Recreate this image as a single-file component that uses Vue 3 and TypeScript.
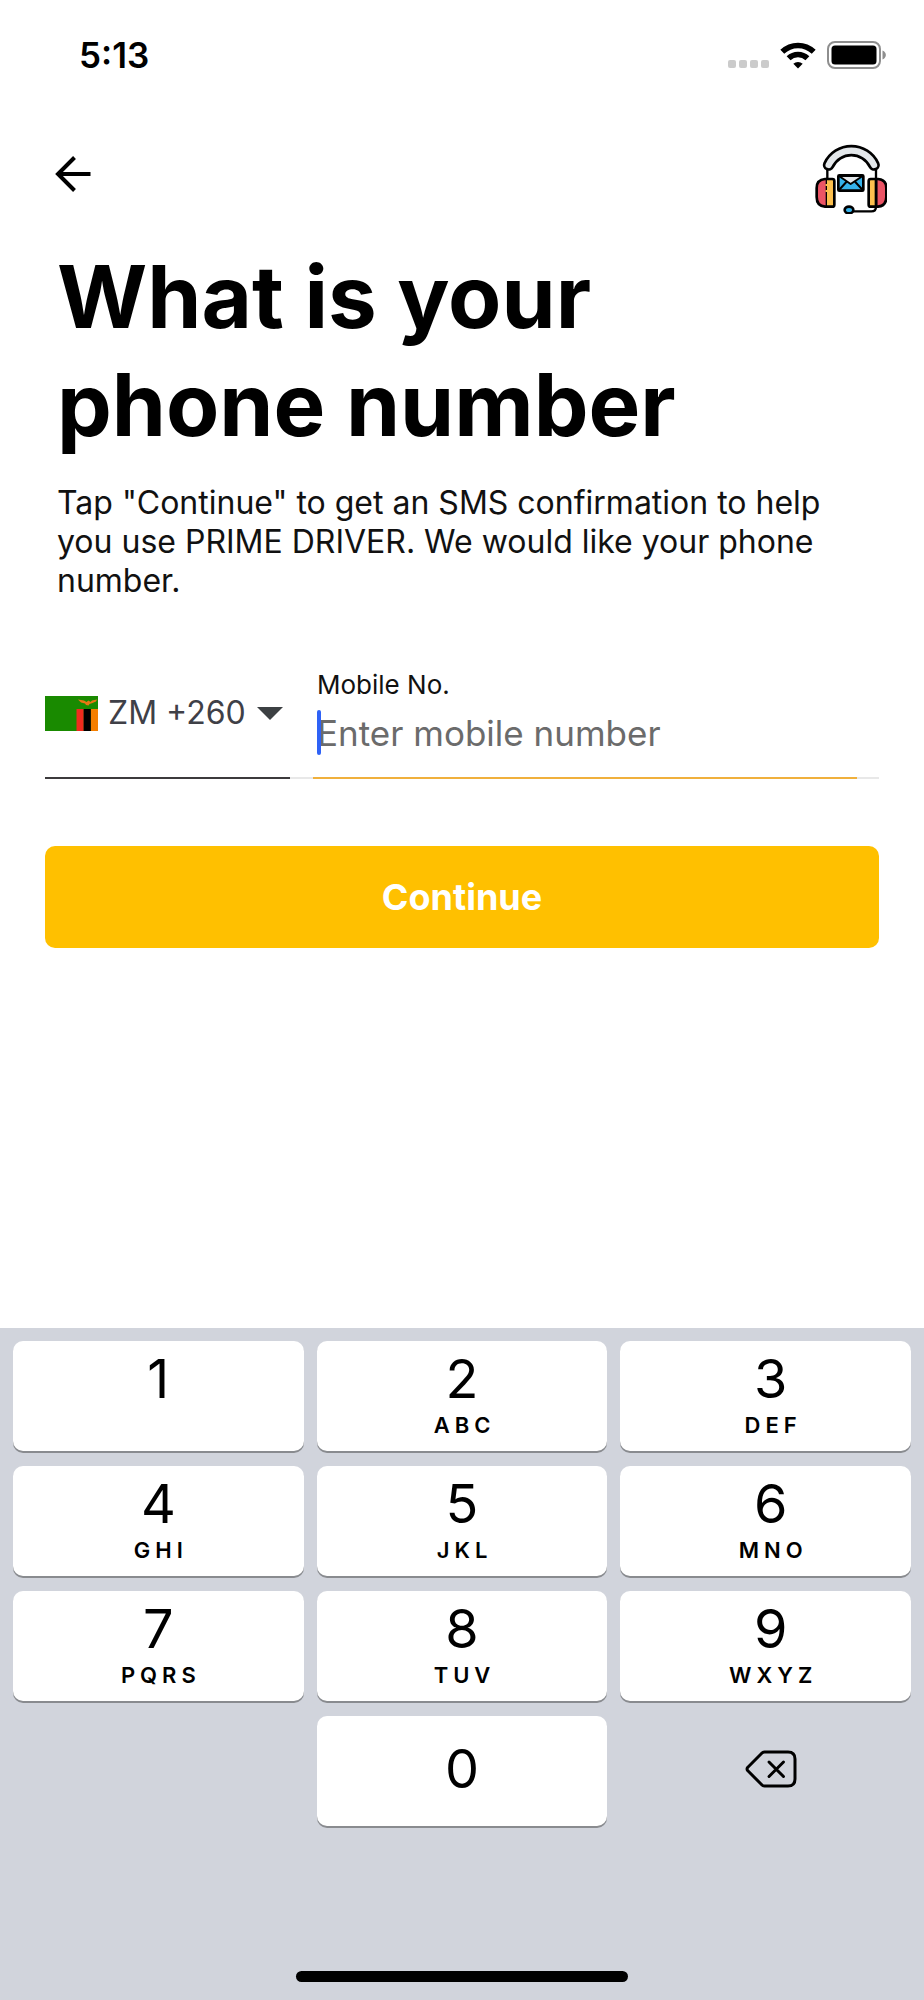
<script setup lang="ts">
import { ref } from 'vue'

interface Key {
  digit: string
  letters: string
}

const keys: Key[] = [
  { digit: '1', letters: '' },
  { digit: '2', letters: 'ABC' },
  { digit: '3', letters: 'DEF' },
  { digit: '4', letters: 'GHI' },
  { digit: '5', letters: 'JKL' },
  { digit: '6', letters: 'MNO' },
  { digit: '7', letters: 'PQRS' },
  { digit: '8', letters: 'TUV' },
  { digit: '9', letters: 'WXYZ' },
]

const country = ref<string>('ZM')
const phone = ref<string>('')

function press(digit: string): void {
  phone.value += digit
}

function erase(): void {
  phone.value = phone.value.slice(0, -1)
}
</script>

<template>
  <div class="screen">
    <header class="status">
      <span class="time">5:13</span>
      <div class="indicators">
        <span class="signal"><i v-for="n in 4" :key="n"></i></span>
        <svg width="36" height="27" viewBox="0 0 36 27" aria-hidden="true">
          <g fill="none" stroke="#000" stroke-width="5.6">
            <path d="M2.3 9.8a22.6 22.6 0 0 1 31.4 0" />
            <path d="M8.6 16.2a13.6 13.6 0 0 1 18.8 0" />
          </g>
          <path d="M18 26.6l-4.7-4.8a7 7 0 0 1 9.4 0z" />
        </svg>
        <svg width="60" height="28" viewBox="0 0 60 28" aria-hidden="true">
          <rect x="1" y="1" width="52" height="26" rx="7" fill="none" stroke="#8e8e8e" stroke-width="2" />
          <rect x="4.500" y="4.500" width="45" height="19" rx="3.500" />
          <path d="M55.500 9.500c4.500 1.800 4.500 7.200 0 9z" fill="#8e8e8e" />
        </svg>
      </div>
    </header>

    <nav class="topbar">
      <button type="button" class="icon-button back" aria-label="Back">
        <svg width="38" height="38" viewBox="0 0 38 38" fill="none" stroke="#000" stroke-width="4">
          <path d="M36.500 19H4M20.500 2.500L4 19l16.500 16.500" />
        </svg>
      </button>
      <button type="button" class="icon-button" aria-label="Support">
        <svg width="72" height="70" viewBox="46 42 216 210" fill="none" stroke="#000" stroke-width="8" stroke-linecap="round" stroke-linejoin="round">
          <path d="M83 112v36M229 112v118q0 14-14 14h-54" stroke-width="7" />
          <path d="M87 105A75 75 0 0 1 223 105" stroke-width="35" />
          <path d="M87 105A75 75 0 0 1 223 105" stroke="#e3e7ea" stroke-width="19" />
          <path d="M82 147H76Q51 149 51 174v27Q51 228 76 230h6z" fill="#eb5465" />
          <path d="M82 147h16q6 0 6 6v71q0 6-6 6H82z" fill="#fdc04e" stroke="none" />
          <path d="M82 147h16q6 0 6 6v71q0 6-6 6H82" />
          <path d="M82 162v6M82 180v6" stroke="#fdc04e" stroke-width="9" stroke-linecap="butt" />
          <path d="M229 147h6q25 2 25 27v27q0 27-25 29h-6z" fill="#eb5465" />
          <path d="M229 147h-16q-6 0-6 6v71q0 6 6 6h16z" fill="#fdc04e" />
          <rect x="116" y="136" width="75" height="46" rx="3" fill="#35b3ec" />
          <path d="M118 138L153 162l36-24z" fill="#e3e7ea" stroke-width="6" />
          <path d="M118 180l22-24M189 180l-22-24" stroke-width="6" />
          <ellipse cx="148" cy="240" rx="13" ry="10" fill="#35b3ec" />
        </svg>
      </button>
    </nav>

    <main class="content">
      <h1>What is your<br />phone number</h1>
      <p class="intro">
        Tap "Continue" to get an SMS confirmation to help you use PRIME DRIVER. We would like your phone number.
      </p>

      <form @submit.prevent>
        <div class="fields">
          <div class="country">
            <svg width="53" height="35" viewBox="0 0 53 35" aria-hidden="true">
              <path fill="#198a00" d="M0 0h53v35H0z" />
              <path fill="#ef2b1d" d="M31.500 13h7.200v22h-7.200z" />
              <path d="M38.700 13h7.200v22h-7.200z" />
              <path fill="#f57f00" d="M45.900 13H53v22h-7.100z" />
              <path fill="#e87613" d="M33 3.500l6 1 2.500 1.500 2-1.500 2 1.500 1.500-1.500 5-1-1 2-3.500 1.500-3 1-1 1.500-2.500-.5-1-1.500-4-1z" />
            </svg>
            <select v-model="country" aria-label="Country code">
              <option value="ZM">ZM +260</option>
            </select>
            <svg width="26" height="13" viewBox="0 0 26 13" aria-hidden="true">
              <path fill="#3c4043" d="M0 0h26L13 13z" />
            </svg>
          </div>
          <div class="mobile">
            <label for="phone">Mobile No.</label>
            <div class="entry">
              <input id="phone" v-model="phone" type="tel" placeholder="Enter mobile number" />
              <span class="caret"></span>
            </div>
          </div>
        </div>
        <button type="submit" class="continue">Continue</button>
      </form>
    </main>

    <section class="keyboard" aria-label="Keypad">
      <div class="keys">
        <button v-for="key in keys" :key="key.digit" type="button" class="key" @click="press(key.digit)">
          <span class="digit">{{ key.digit }}</span>
          <span class="letters">{{ key.letters }}</span>
        </button>
        <span></span>
        <button type="button" class="key zero" @click="press('0')"><span class="digit">0</span></button>
        <button type="button" class="erase" aria-label="Delete" @click="erase">
          <svg width="52" height="38" viewBox="0 0 52 38" fill="none" stroke="#000" stroke-width="3" stroke-linecap="round" stroke-linejoin="round">
            <path d="M19.500 2H43q7 0 7 7v20q0 7-7 7H19.500q-1.500 0-2.500-1L2.600 20.500Q1.500 19 2.600 17.500L17 3q1-1 2.500-1z" />
            <path d="M24 12l14.500 14.500M38.500 12L24 26.500" />
          </svg>
        </button>
      </div>
      <div class="home"></div>
    </section>
  </div>
</template>

<style>
body {
  background: #fff;
}
</style>

<style scoped>
.screen {
  box-sizing: border-box;
  display: flex;
  flex-direction: column;
  min-height: 100vh;
  color: #000;
  font-family: Inter, "Liberation Sans", sans-serif;
}

button,
input,
select {
  margin: 0;
  padding: 0;
  border: 0;
  border-radius: 0;
  background: none;
  color: inherit;
  font: inherit;
}

svg {
  display: block;
  flex: none;
}

.status {
  display: flex;
  align-items: center;
  justify-content: space-between;
  height: 110px;
  padding: 0 37px 0 79px;
}

.time {
  font-size: 35px;
  font-weight: 600;
}

.indicators {
  display: flex;
  align-items: center;
  gap: 11px;
}

.signal {
  display: flex;
  align-self: flex-end;
  gap: 3px;
  padding-bottom: 1px;
}

.signal i {
  width: 8px;
  height: 8px;
  border-radius: 2px;
  background: #cbcbcb;
}

.topbar {
  display: flex;
  align-items: flex-start;
  justify-content: space-between;
  padding: 34px 37px 0 54px;
}

.icon-button {
  display: flex;
  align-items: center;
}

.back {
  height: 60px;
}

.content {
  padding: 29px 45px 40px;
}

h1 {
  margin: 0 12px;
  font-size: 87px;
  font-weight: 700;
  line-height: 108px;
}

.intro {
  margin: 24px 45px 0 12px;
  color: #111;
  font-size: 32px;
  line-height: 39px;
}

.fields {
  display: flex;
  gap: 23px;
  margin-top: 70px;
  padding-right: 22px;
  box-shadow: inset 0 -2px #e8e8e8;
}

.country {
  display: flex;
  align-items: center;
  gap: 10px;
  box-sizing: border-box;
  width: 245px;
  padding-bottom: 20px;
  border-bottom: 2px solid #3c3a3c;
}

.country select {
  flex: none;
  width: 139px;
  padding-bottom: 3px;
  appearance: none;
  color: #3f4047;
  font-size: 32px;
}

.mobile {
  flex: 1;
  padding: 0 4px 22px;
  border-bottom: 2px solid #f0b03c;
}

.mobile label {
  display: block;
  color: #111;
  font-size: 26px;
  line-height: 30px;
}

.entry {
  position: relative;
  margin-top: 10px;
}

.entry input {
  display: block;
  width: 100%;
  height: 45px;
  outline: none;
  font-size: 35px;
}

.entry input::placeholder {
  color: #6b6b6b;
  opacity: 1;
}

.caret {
  position: absolute;
  top: 0;
  left: 0;
  width: 4px;
  height: 45px;
  border-radius: 2px;
  background: #2f62f6;
}

.continue {
  display: block;
  width: 100%;
  height: 102px;
  margin-top: 67px;
  border-radius: 10px;
  background: #ffc000;
  color: #fff;
  font-size: 36px;
  font-weight: 700;
}

.keyboard {
  margin-top: auto;
  padding: 13px 13px 18px;
  background: #d1d4dc;
}

.keys {
  display: grid;
  grid-template-columns: repeat(3, 1fr);
  grid-auto-rows: 110px;
  gap: 15px 13px;
}

.key {
  display: flex;
  flex-direction: column;
  align-items: center;
  padding-top: 5px;
  border-radius: 10px;
  background: #fff;
  box-shadow: 0 2px #898b8f;
}

.key:nth-child(3n),
.erase {
  padding-left: 10px;
}

.digit {
  font-size: 54px;
  line-height: 66px;
}

.letters {
  font-size: 22px;
  font-weight: 600;
  line-height: 26px;
  letter-spacing: 5px;
  text-indent: 5px;
}

.zero {
  justify-content: center;
  padding: 0 0 4px;
}

.erase {
  display: flex;
  align-items: center;
  justify-content: center;
  padding-bottom: 4px;
}

.home {
  width: 37%;
  height: 11px;
  margin: 145px auto 0;
  border-radius: 6px;
  background: #000;
}
</style>
